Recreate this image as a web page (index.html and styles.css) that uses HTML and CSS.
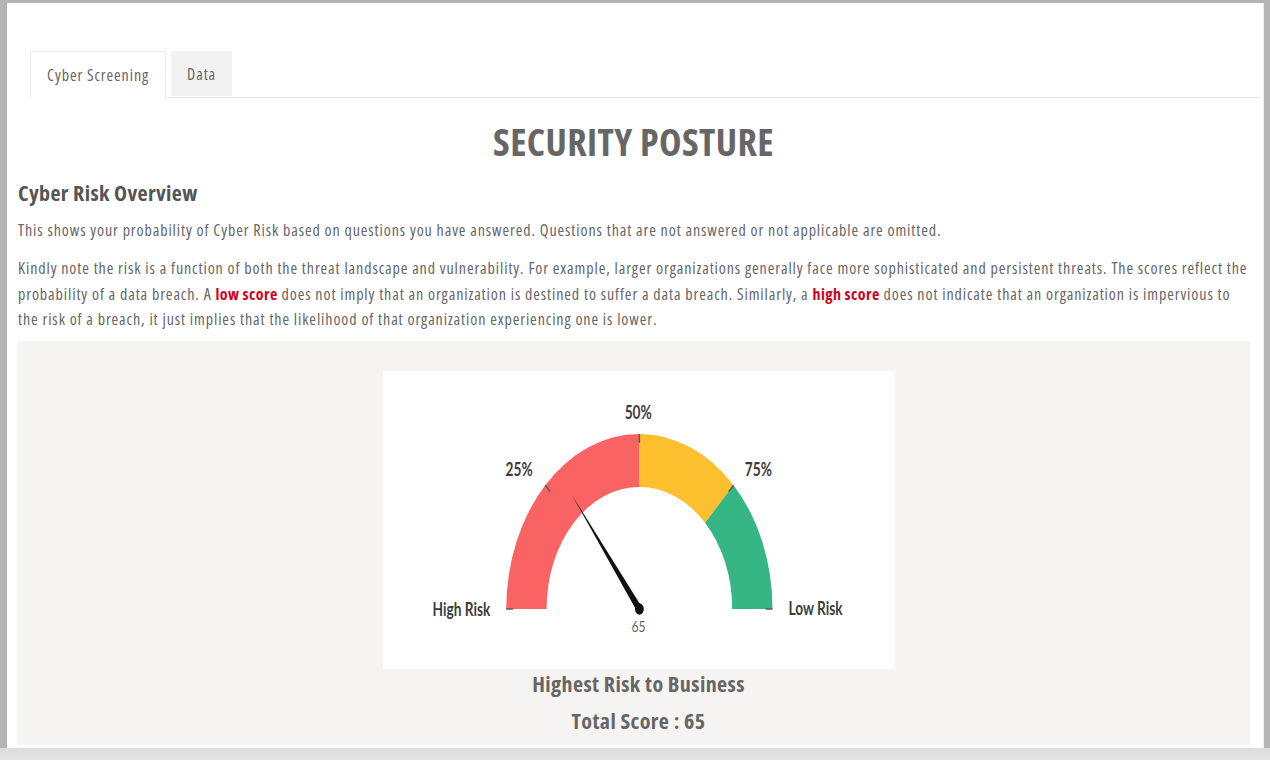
FILE: index.html
```html
<!DOCTYPE html>
<html lang="en">
<head>
<meta charset="utf-8">
<title>Security Posture</title>
<link rel="stylesheet" href="styles.css">
</head>
<body>
<div class="panel">
  <ul class="tabs">
    <li class="tab active">Cyber Screening</li>
    <li class="tab">Data</li>
  </ul>
  <div class="content">
    <h1 class="title">SECURITY POSTURE</h1>
    <h2 class="subtitle">Cyber Risk Overview</h2>
    <p>This shows your probability of Cyber Risk based on questions you have answered. Questions that are not answered or not applicable are omitted.</p>
    <p class="note">Kindly note the risk is a function of both the threat landscape and vulnerability. For example, larger organizations generally face more sophisticated and persistent threats. The scores reflect the probability of a data breach. A <strong class="hl">low score</strong> does not imply that an organization is destined to suffer a data breach. Similarly, a <strong class="hl">high score</strong> does not indicate that an organization is impervious to the risk of a breach, it just implies that the likelihood of that organization experiencing one is lower.</p>
    <div class="gauge-panel">
      <div class="gauge-card">
        <svg class="gauge" width="512" height="298" viewBox="0 0 673 298" preserveAspectRatio="none">
          <path class="seg-red" d="M162 238 A175 175 0 0 1 337 63 L337 116 A122 122 0 0 0 215 238 Z"/>
          <path class="seg-yellow" d="M337 63 A175 175 0 0 1 460.74 114.26 L423.27 151.73 A122 122 0 0 0 337 116 Z"/>
          <path class="seg-green" d="M460.74 114.26 A175 175 0 0 1 512 238 L459 238 A122 122 0 0 0 423.27 151.73 Z"/>
          <g class="ticks">
            <line x1="162" y1="238" x2="171" y2="238"/>
            <line x1="213.26" y1="114.26" x2="219.62" y2="120.62"/>
            <line x1="337" y1="63" x2="337" y2="72"/>
            <line x1="460.74" y1="114.26" x2="454.38" y2="120.62"/>
            <line x1="512" y1="238" x2="503" y2="238"/>
          </g>
          <polygon class="needle" points="248.4,124 340.2,236 333.8,240.2"/>
          <circle class="hub" cx="337" cy="238" r="5.8"/>
          <text class="lbl" x="335.5" y="48.5" text-anchor="middle">50%</text>
          <text class="lbl" x="179" y="105.5" text-anchor="middle">25%</text>
          <text class="lbl" x="493.4" y="105.5" text-anchor="middle">75%</text>
          <text class="lbl" x="141" y="245.5" text-anchor="end">High Risk</text>
          <text class="lbl" x="533" y="244.5" text-anchor="start">Low Risk</text>
          <text class="val" x="336" y="261.5" text-anchor="middle">65</text>
        </svg>
      </div>
      <div class="caption">Highest Risk to Business</div>
      <div class="caption score">Total Score : 65</div>
    </div>
  </div>
</div>
</body>
</html>
```
FILE: styles.css
```css
html, body {
  margin: 0;
  height: 760px;
  overflow: hidden;
}
body {
  background: linear-gradient(to bottom, #b4b4b4 0, #b4b4b4 748px, #dcdcdc 748px, #e4e4e4 760px);
  font-family: "Open Sans", "Liberation Sans", sans-serif;
  font-stretch: 75%;
  color: #666;
}
.panel {
  margin: 3px 6px 0 7px;
  height: 745px;
  background: #fff;
  overflow: hidden;
  border-right: 1px solid #eee;
}
.tabs {
  display: flex;
  gap: 5px;
  list-style: none;
  margin: 48px 2px 0 23px;
  padding: 0;
  border-bottom: 1px solid #e6e6e6;
}
.tab {
  height: 45px;
  line-height: 46px;
  padding: 0 16px;
  font-size: 16px;
  letter-spacing: 0.9px;
  color: #666;
  background: #f2f2f2;
}
.tab.active {
  background: #fff;
  border: 1px solid #ececec;
  border-bottom: none;
  margin-bottom: -1px;
  height: 46px;
  line-height: 46px;
  padding: 0 16px;
}
.content {
  padding: 0 13px 0 10px;
}
.title {
  margin: 20px 0 0;
  text-align: center;
  font-size: 38px;
  line-height: 46px;
  letter-spacing: 0.4px;
  font-weight: 700;
  color: #666;
}
.subtitle {
  margin: 14px 0 0 1px;
  font-size: 22px;
  line-height: 28px;
  letter-spacing: 0.35px;
  font-weight: 700;
  color: #555;
}
p {
  margin: 12px 0 0 1px;
  font-size: 16px;
  line-height: 25.5px;
  letter-spacing: 0.9px;
  color: #666;
}
.note {
  margin-top: 12.5px;
}
.hl {
  color: #d0021b;
  font-weight: 700;
  letter-spacing: 0.4px;
}
.gauge-panel {
  margin-top: 8px;
  height: 374px;
  padding: 30px 0 0 10px;
  background: #f5f4f2;
  text-align: center;
}
.gauge-card {
  width: 512px;
  height: 298px;
  margin: 0 auto;
  background: #fff;
}
.gauge {
  display: block;
}
.seg-red { fill: #fa6363; }
.seg-yellow { fill: #fcc02f; }
.seg-green { fill: #36b585; }
.ticks line {
  stroke: #5a5a5a;
  stroke-width: 1.5;
  vector-effect: non-scaling-stroke;
}
.needle { fill: #111; }
.hub { fill: #111; }
.lbl {
  font-family: Lato, "Liberation Sans", sans-serif;
  font-weight: 700;
  font-size: 18px;
  fill: #3d3d3d;
}
.val {
  font-family: Lato, "Liberation Sans", sans-serif;
  font-size: 16px;
  fill: #666;
}
.caption {
  font-size: 22px;
  line-height: 28px;
  letter-spacing: 0.4px;
  font-weight: 700;
  color: #666;
}
.score {
  margin-top: 9px;
}
```
